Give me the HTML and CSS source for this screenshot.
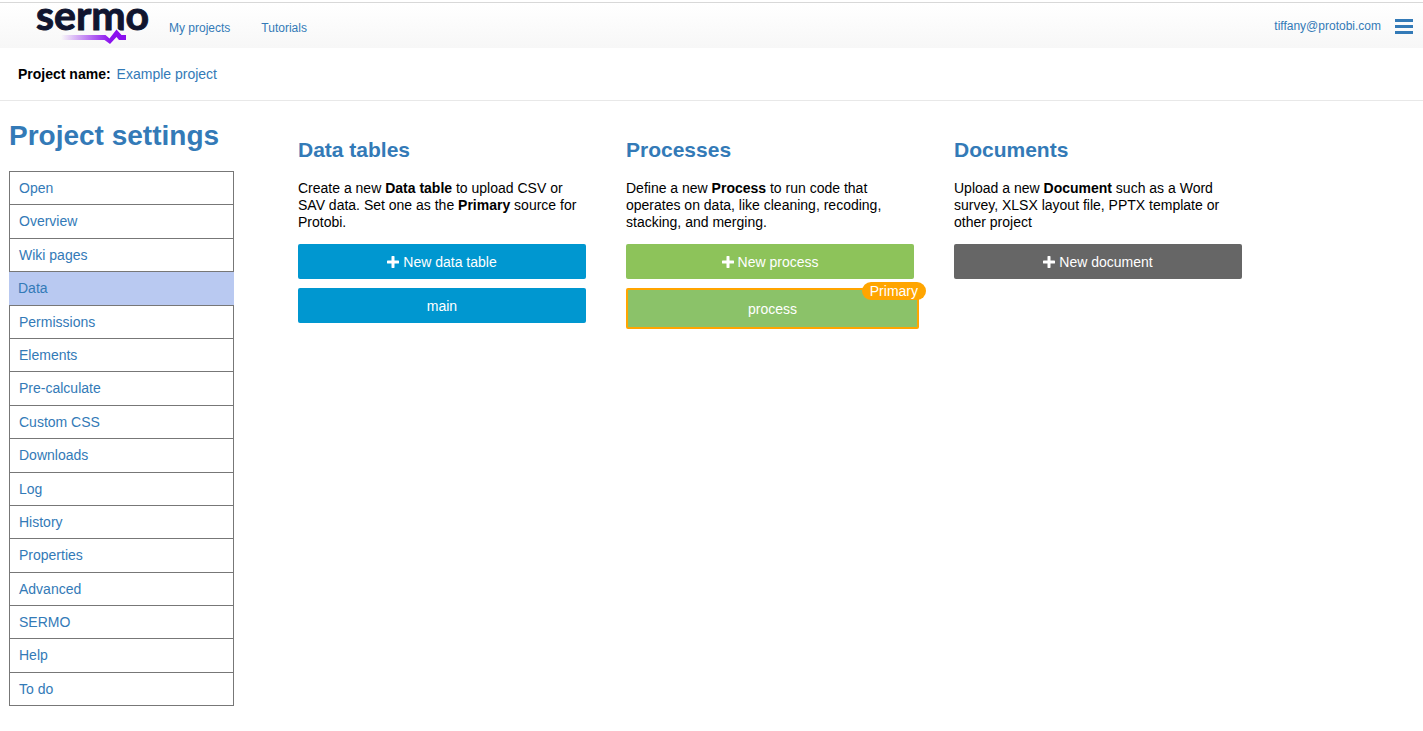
FILE: index.html
```html
<!DOCTYPE html>
<html lang="en">
<head>
  <meta charset="UTF-8">
  <meta name="viewport" content="width=device-width, initial-scale=1.0">
  <title>Project settings</title>
  <link rel="stylesheet" href="styles.css">
</head>
<body>
  <!-- Top navigation -->
  <header class="navbar">
    <a href="#" class="logo" aria-label="sermo">
      <svg width="120" height="44" viewBox="0 0 120 44">
        <defs>
          <linearGradient id="pulse" gradientUnits="userSpaceOnUse" x1="26" y1="0" x2="76" y2="0">
            <stop offset="0" stop-color="#8a10ee" stop-opacity="0"/>
            <stop offset="1" stop-color="#8a10ee"/>
          </linearGradient>
        </defs>
        <text x="1" y="26" class="logo-text">sermo</text>
        <path d="M70 33L75 37L81.500 29L87 33" fill="none" stroke="#fafafa" stroke-width="8"/>
        <path d="M26 31H70.500L74.500 34.500L81.500 25.500L86.500 31H91V36H84L81.500 33L75 40L69.500 36H26Z" fill="url(#pulse)"/>
      </svg>
    </a>
    <nav class="nav-links">
      <a href="#">My projects</a>
      <a href="#">Tutorials</a>
    </nav>
    <div class="user">
      <a href="#">tiffany@protobi.com</a>
      <button class="menu-btn" aria-label="Menu">
        <svg width="18" height="16" viewBox="0 0 18 16" fill="#337ab7">
          <rect width="18" height="3" y="1"/>
          <rect width="18" height="3" y="7"/>
          <rect width="18" height="3" y="13"/>
        </svg>
      </button>
    </div>
  </header>

  <div class="project-bar">
    <b>Project name:</b>
    <a href="#">Example project</a>
  </div>

  <div class="page">
    <!-- Settings menu -->
    <aside class="sidebar">
      <h1>Project settings</h1>
      <ul class="menu">
        <li><a href="#">Open</a></li>
        <li><a href="#">Overview</a></li>
        <li><a href="#">Wiki pages</a></li>
        <li class="active"><a href="#">Data</a></li>
        <li><a href="#">Permissions</a></li>
        <li><a href="#">Elements</a></li>
        <li><a href="#">Pre-calculate</a></li>
        <li><a href="#">Custom CSS</a></li>
        <li><a href="#">Downloads</a></li>
        <li><a href="#">Log</a></li>
        <li><a href="#">History</a></li>
        <li><a href="#">Properties</a></li>
        <li><a href="#">Advanced</a></li>
        <li><a href="#">SERMO</a></li>
        <li><a href="#">Help</a></li>
        <li><a href="#">To do</a></li>
      </ul>
    </aside>

    <main class="columns">
      <section class="column">
        <h2>Data tables</h2>
        <p>Create a new <b>Data table</b> to upload CSV or SAV data. Set one as the <b>Primary</b> source for Protobi.</p>
        <button class="btn btn-table">
          <svg class="plus" width="12" height="12" viewBox="0 0 12 12"><path d="M6 1V11M1 6H11"/></svg>
          New data table
        </button>
        <button class="btn btn-table">main</button>
      </section>

      <section class="column">
        <h2>Processes</h2>
        <p>Define a new <b>Process</b> to run code that operates on data, like cleaning, recoding, stacking, and merging.</p>
        <button class="btn btn-process">
          <svg class="plus" width="12" height="12" viewBox="0 0 12 12"><path d="M6 1V11M1 6H11"/></svg>
          New process
        </button>
        <button class="btn btn-process primary">process <span class="badge">Primary</span></button>
      </section>

      <section class="column">
        <h2>Documents</h2>
        <p>Upload a new <b>Document</b> such as a Word survey, XLSX layout file, PPTX template or other project</p>
        <button class="btn btn-document">
          <svg class="plus" width="12" height="12" viewBox="0 0 12 12"><path d="M6 1V11M1 6H11"/></svg>
          New document
        </button>
      </section>
    </main>
  </div>
</body>
</html>
```
FILE: styles.css
```css
* {
  box-sizing: border-box;
}
body {
  margin: 0;
  padding-top: 2px;
  font-family: "Liberation Sans", Arial, sans-serif;
  font-size: 14px;
  color: #000;
  background-color: #fff;
}
a {
  color: #337ab7;
  text-decoration: none;
}
h1, h2 {
  margin: 0;
  color: #337ab7;
}

/* Top navigation */
.navbar {
  display: flex;
  align-items: center;
  height: 46px;
  padding: 0 10px 0 35px;
  border-top: 1px solid #d8d8d8;
  background: linear-gradient(#fff, #f7f7f7);
  font-size: 12px;
}
.logo {
  display: flex;
}
.logo svg {
  overflow: visible;
}
.logo-text {
  font-family: Lato, sans-serif;
  font-size: 41px;
  font-weight: 700;
  fill: #10152f;
  stroke: #10152f;
  stroke-width: 1px;
}
.nav-links {
  display: flex;
  gap: 31px;
  padding: 4px 0 0 14px;
}
.user {
  display: flex;
  align-items: center;
  gap: 14px;
  margin-left: auto;
}
.menu-btn {
  display: flex;
  padding: 0;
  border: none;
  background: none;
  cursor: pointer;
}

.project-bar {
  display: flex;
  gap: 6px;
  padding: 18px;
  border-bottom: 1px solid #e8e8e8;
  line-height: 16px;
}

/* Page layout */
.page {
  display: flex;
  gap: 64px;
  padding: 17px 9px;
}
.sidebar {
  flex: 0 0 225px;
}
.sidebar h1 {
  font-size: 28px;
  line-height: 36px;
}
.menu {
  margin: 17px 0 0;
  padding: 0;
  list-style: none;
  border: 1px solid #777;
  border-top: none;
}
.menu li {
  border-top: 1px solid #777;
}
.menu a {
  display: block;
  padding: 5px 9px;
  line-height: 1.6;
}
.menu .active {
  margin: 0 -1px;
  background-color: #b9c9f1;
}

/* Data columns */
.columns {
  flex: 1;
  display: grid;
  grid-template-columns: repeat(3, minmax(0, 288px));
  gap: 40px;
  padding-top: 18px;
}
.column h2 {
  font-size: 21px;
  line-height: 28px;
}
.column p {
  margin: 16px 0 13px;
  line-height: 17px;
}
.btn {
  display: flex;
  justify-content: center;
  align-items: center;
  gap: 4px;
  width: 100%;
  margin-bottom: 9px;
  padding: 9px 9px 8px;
  border: none;
  border-radius: 2px;
  font-family: inherit;
  font-size: 14px;
  line-height: 18px;
  color: #fff;
  cursor: pointer;
}
.btn-table {
  background-color: #0097d0;
}
.btn-process {
  background-color: #8dc35a;
}
.btn-document {
  background-color: #666;
}
.plus {
  fill: none;
  stroke: #fff;
  stroke-width: 3;
  stroke-linecap: round;
}
.primary {
  position: relative;
  width: calc(100% + 5px);
  padding: 10px 10px 9px;
  border: 2px solid orange;
  background-color: #8bc269;
}
.badge {
  position: absolute;
  top: -8px;
  right: -9px;
  padding: 0 8px;
  border-radius: 9px;
  background-color: orange;
  line-height: 18px;
}
```
